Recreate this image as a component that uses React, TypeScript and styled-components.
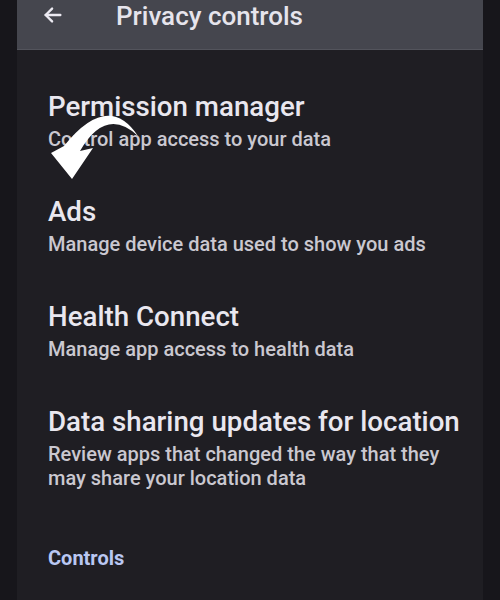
import React from 'react';
import styled, { createGlobalStyle } from 'styled-components';

const GlobalStyle = createGlobalStyle`
  html, body {
    margin: 0;
    padding: 0;
    background: #17161b;
  }
  body {
    font-family: Roboto, "Liberation Sans", sans-serif;
    -webkit-font-smoothing: antialiased;
  }
`;

const Screen = styled.div`
  position: relative;
  width: 466px;
  min-height: 600px;
  margin-left: 17px;
  background: #1f1e23;
  overflow: hidden;
`;

const TopBar = styled.header`
  display: flex;
  align-items: flex-start;
  height: 50px;
  background: #45464e;
  border-bottom: 1px solid #53545c;
  box-sizing: border-box;
`;

const BackButton = styled.button`
  display: flex;
  align-items: center;
  justify-content: center;
  width: 30px;
  height: 30px;
  margin-left: 21px;
  padding: 0;
  border: none;
  background: none;
  color: #eceaf2;
`;

const TopTitle = styled.h1`
  margin: 0 0 0 48px;
  font-size: 26px;
  line-height: 32px;
  font-weight: 500;
  color: #e6e4ec;
`;

const List = styled.div`
  display: flex;
  flex-direction: column;
  padding: 40px 0 0 31px;
`;

const Item = styled.div`
  display: flex;
  flex-direction: column;
  gap: 3px;
  padding-bottom: 44px;
`;

const ItemTitle = styled.div`
  font-size: 27.7px;
  line-height: 34px;
  font-weight: 500;
  color: #e9e7ef;
`;

const ItemText = styled.div`
  font-size: 20px;
  line-height: 24px;
  font-weight: 500;
  color: #cac8d0;
  max-width: 410px;
`;

const SectionLabel = styled.div`
  margin-top: 12px;
  font-size: 20px;
  line-height: 24px;
  font-weight: 700;
  color: #b9c7f2;
`;

const Pointer = styled.svg`
  position: absolute;
  left: 13px;
  top: 105px;
`;

const items = [
  { title: 'Permission manager', text: 'Control app access to your data' },
  { title: 'Ads', text: 'Manage device data used to show you ads' },
  { title: 'Health Connect', text: 'Manage app access to health data' },
  {
    title: 'Data sharing updates for location',
    text: 'Review apps that changed the way that they may share your location data',
  },
];

const App = () => {
  return (
    <>
      <GlobalStyle />
      <Screen>
        <TopBar>
          <BackButton aria-label="Back">
            <svg width="22" height="22" viewBox="0 0 24 24" fill="none" stroke="currentColor" strokeWidth="2.6" strokeLinecap="round" strokeLinejoin="round">
              <path d="M20 12H4" />
              <path d="M11 5l-7 7 7 7" />
            </svg>
          </BackButton>
          <TopTitle>Privacy controls</TopTitle>
        </TopBar>
        <List>
          {items.map((item) => (
            <Item key={item.title}>
              <ItemTitle>{item.title}</ItemTitle>
              <ItemText>{item.text}</ItemText>
            </Item>
          ))}
          <SectionLabel>Controls</SectionLabel>
        </List>
        {/* curved arrow drawn over the first row */}
        <Pointer width="120" height="80" viewBox="30 105 120 80">
          <path
            d="M138 136 Q108 91 64 146 L51 153 L72 179 L93 148 L80 151 Q106 106 138 136 Z"
            fill="#ffffff"
          />
        </Pointer>
      </Screen>
    </>
  );
};

export default App;
